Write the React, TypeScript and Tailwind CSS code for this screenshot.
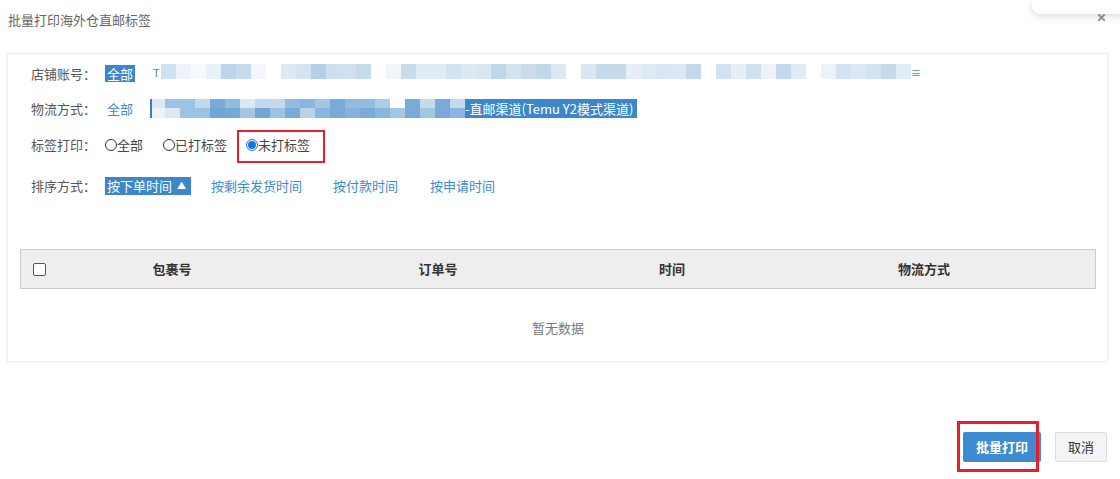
import { X } from "lucide-react";

const shopCells = [
  "#cfe0ef", "#eef3f9", "#f7f9fc", "#e8f0f8", "#bcd5ea", "#c5dbee", "#f3f6fb", "",
  "#dde9f4", "#d5e4f1", "#b4cfe8", "#cde0f0", "#d0e0f0", "#c5dbee", "",
  "#f1f5fa", "#c8dcee", "#e0ebf5", "#e0ebf5", "#d4e3f1", "#dce8f4", "#d9e6f3", "#bfd6eb",
  "#d4e3f1", "#cadcee", "#c1d7ec", "#dce8f4", "",
  "#d9e6f3", "#c5daed", "#c5daed", "#e6eef7", "#dfeaf5", "#d9e6f3", "#dce8f4", "#c2d8ec", "",
  "#d2e2f1", "#e6eef7", "#cfe0ef", "#edf3f9", "#c2d8ec", "#e0ebf5", "",
  "#eef3f9", "#d4e3f1", "#dce8f4", "#d4e3f1", "#c5daed", "#e2ecf6",
];

const shipTop = [
  "#9dc2e3", "#9dc2e3", "#c2d8ec", "#7aaad8", "#93bbe0", "#dce8f4", "#c2d8ec", "#c5daed",
  "#93bbe0", "#8ab5de", "#a4c5e4", "#7aaad8", "#93bbe0", "#93bbe0", "#aecbe7", "#ffffff",
  "#7aaad8", "#c5daed", "#7aaad8", "#c5daed",
];
const shipBottom = [
  "#dce8f4", "#9dc2e3", "#9dc2e3", "#6ea6d6", "#77a9d8", "#a4c5e4", "#72a6d6", "#9dc2e3",
  "#7aaad8", "#b9d2ea", "#8ab5de", "#7aaad8", "#85b1dc", "#7aaad8", "#8ab5de", "#a4c5e4",
  "#7aaad8", "#a4c5e4", "#7aaad8", "#8ab5de",
];

function Radio({ checked, label }: { checked?: boolean; label: string }) {
  return (
    <span className="flex items-center">
      {checked ? (
        <span className="w-[12px] h-[12px] rounded-full border border-[#1a73e8] flex items-center justify-center">
          <span className="w-[8px] h-[8px] rounded-full bg-[#1a73e8]" />
        </span>
      ) : (
        <span className="w-[12px] h-[12px] rounded-full border border-[#333]" />
      )}
      <span>{label}</span>
    </span>
  );
}

export default function App() {
  return (
    <div
      className="relative w-[1120px] h-[479px] bg-white overflow-hidden text-[13px] text-[#555]"
      style={{ fontFamily: '"Noto Sans CJK SC", "Noto Sans", sans-serif' }}
    >
      {/* Title */}
      <div className="h-[40px] flex items-center pl-[8px] text-[#666]">批量打印海外仓直邮标签</div>

      {/* Close + floating card */}
      <X className="absolute left-[1096px] top-[12px] w-[11px] h-[11px] text-[#999]" strokeWidth={4} />
      <div className="absolute left-[1032px] top-0 w-[100px] h-[14px] bg-white rounded-bl-[8px] shadow-[0_2px_8px_rgba(0,0,0,0.15)]" />

      {/* Filter panel */}
      <div className="mt-[13px] ml-[7px] w-[1101px] h-[309px] border border-[#eee] shadow-[0_0_4px_rgba(0,0,0,0.06)] pt-[10px]">
        {/* 店铺账号 */}
        <div className="flex items-start h-[19px] pl-[23px]">
          <div className="w-[74px] leading-[19px]">店铺账号：</div>
          <span className="mt-[1px] h-[17px] leading-[17px] px-[2px] bg-[#3b87c9] text-white">全部</span>
          <span className="ml-[18px] w-[8px] leading-[17px] text-[11px] text-[#3a8ad0]">T</span>
          <div className="flex">
            {shopCells.map((c, i) => (
              <span key={i} className="w-[15px] h-[15px]" style={{ background: c || "#ffffff" }} />
            ))}
          </div>
          <span className="leading-[17px] text-[10px] text-[#3a8ad0]">≡</span>
        </div>

        {/* 物流方式 */}
        <div className="flex items-start h-[19px] mt-[16px] pl-[23px]">
          <div className="w-[74px] leading-[19px]">物流方式：</div>
          <span className="h-[19px] leading-[19px] px-[2px] text-[#3a8ad0]">全部</span>
          <div className="ml-[15px] w-[2px] h-[19px] bg-[#3a7fc4]" />
          <div className="flex flex-col">
            <div className="flex">
              <span className="w-[13px] h-[9px] bg-[#dce8f4]" />
              {shipTop.map((c, i) => (
                <span key={i} className="w-[15px] h-[9px]" style={{ background: c }} />
              ))}
            </div>
            <div className="flex">
              <span className="w-[13px] h-[10px] bg-[#eef3f9]" />
              {shipBottom.map((c, i) => (
                <span key={i} className="w-[15px] h-[10px]" style={{ background: c }} />
              ))}
            </div>
          </div>
          <span className="h-[19px] leading-[19px] pr-[4px] bg-[#3b87c9] text-white">-直邮渠道(Temu Y2模式渠道)</span>
        </div>

        {/* 标签打印 */}
        <div className="flex items-center h-[19px] mt-[17px] pl-[23px] text-[#444]">
          <div className="w-[74px] text-[#555]">标签打印：</div>
          <Radio label="全部" />
          <span className="ml-[20px]">
            <Radio label="已打标签" />
          </span>
          <span className="ml-[19px]">
            <Radio checked label="未打标签" />
          </span>
        </div>

        {/* 排序方式 */}
        <div className="flex items-center h-[19px] mt-[22px] pl-[23px] text-[#3a8ad0]">
          <div className="w-[74px] text-[#555]">排序方式：</div>
          <span className="h-[18px] leading-[18px] pl-[2px] pr-[5px] bg-[#3b87c9] text-white flex items-center gap-[5px]">
            按下单时间
            <span className="text-[9px]">▲</span>
          </span>
          <span className="ml-[20px]">按剩余发货时间</span>
          <span className="ml-[31px]">按付款时间</span>
          <span className="ml-[32px]">按申请时间</span>
        </div>

        {/* Table */}
        <div className="mt-[54px] ml-[12px] w-[1076px]">
          <div className="flex h-[40px] items-center bg-[#eeeeee] border border-[#ccc] font-bold text-[#333]">
            <div className="w-[38px] flex items-center pl-[12px]">
              <span className="w-[13px] h-[13px] rounded-[2px] border border-[#555] bg-white" />
            </div>
            <div className="w-[226px] text-center">包裹号</div>
            <div className="w-[306px] text-center">订单号</div>
            <div className="w-[162px] text-center">时间</div>
            <div className="flex-1 text-center">物流方式</div>
          </div>
          <div className="pt-[29px] text-center text-[#777] leading-[20px]">暂无数据</div>
        </div>
      </div>

      {/* Footer buttons */}
      <div className="mt-[70px] flex justify-end pr-[13px] gap-[14px]">
        <button className="w-[78px] h-[30px] bg-[#3d8bd0] text-white font-bold rounded-[2px]">批量打印</button>
        <button className="w-[52px] h-[30px] bg-[#f4f4f4] border border-[#ddd] text-[#333] rounded-[2px]">取消</button>
      </div>

      {/* Red annotation boxes */}
      <div className="absolute left-[237px] top-[130px] w-[88px] h-[33px] border-2 border-[#e5202a]" />
      <div className="absolute left-[957px] top-[421px] w-[82px] h-[51px] border-[3px] border-[#e5202a]" />
    </div>
  );
}
